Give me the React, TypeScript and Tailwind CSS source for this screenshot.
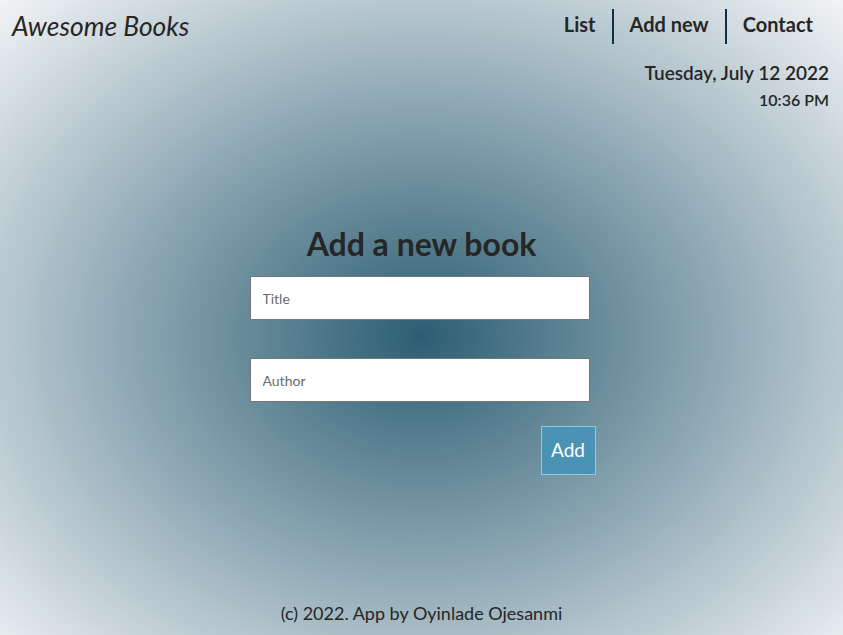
import React from 'react';

// Awesome Books - add new book view
const links = ['List', 'Add new', 'Contact'];

export default function App() {
  return (
    <div
      className="flex h-[635px] w-full flex-col bg-[radial-gradient(ellipse_at_50%_53%,#2c5e73_0%,#f2f4f6_100%)] text-[#262626]"
      style={{ fontFamily: 'Lato, "Open Sans", sans-serif' }}
    >
      <header className="flex items-start justify-between pl-3 pr-[14px]">
        <h1 className="mt-[11px] text-[26.4px] italic leading-[30px]">Awesome Books</h1>
        <div className="flex flex-col items-end">
          <nav className="mt-[9px] mr-4 flex">
            {links.map((l, i) => (
              <a
                key={l}
                className={`h-[35px] px-4 pt-[3px] text-[20px] font-bold leading-[24px] ${
                  i > 0 ? 'border-l-2 border-[#0b3344]' : ''
                } ${i === links.length - 1 ? 'pr-0' : ''}`}
              >
                {l}
              </a>
            ))}
          </nav>
          <p className="mt-[17px] text-[19px] font-semibold leading-[24px]">Tuesday, July 12 2022</p>
          <p className="mt-[5px] text-[16px] font-semibold leading-[20px]">10:36 PM</p>
        </div>
      </header>

      <main className="flex flex-1 flex-col items-center pt-[114px]">
        <h2 className="text-[32px] font-bold leading-[40px]">Add a new book</h2>
        <form className="mt-[12px] ml-[2px] flex w-[346px] flex-col">
          <input
            placeholder="Title"
            className="h-[44px] w-[340px] border border-[#767676] bg-white px-3 text-[14px] placeholder:text-[#6b6b6b]"
          />
          <input
            placeholder="Author"
            className="mt-[38px] h-[44px] w-[340px] border border-[#767676] bg-white px-3 text-[14px] placeholder:text-[#6b6b6b]"
          />
          <button
            type="button"
            className="mt-[24px] self-end h-[49px] w-[55px] border border-[#8fcbe8] bg-[#4a93b4] text-[19px] text-white"
          >
            Add
          </button>
        </form>
      </main>

      <footer className="pb-[10px] text-center text-[18px] leading-[24px]">(c) 2022. App by Oyinlade Ojesanmi</footer>
    </div>
  );
}
